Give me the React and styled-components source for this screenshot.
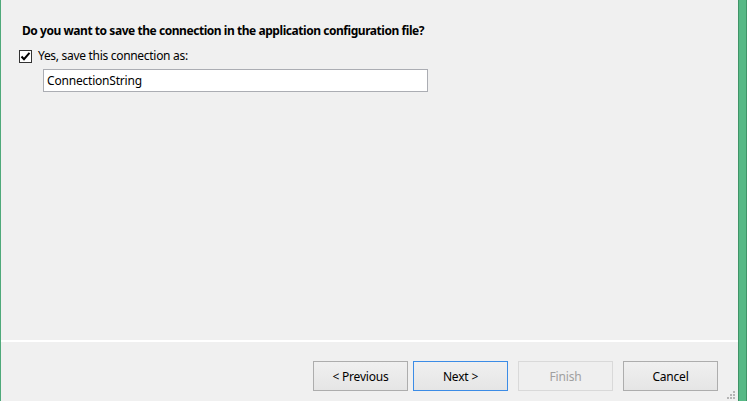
import React from "react";
import styled, { createGlobalStyle } from "styled-components";

const Global = createGlobalStyle`
  html, body { margin: 0; padding: 0; background: #f0f0f0; }
  body { font-family: "Noto Sans", "Open Sans", sans-serif; font-size: 12px; color: #000; }
`;

const Window = styled.div`
  width: 747px;
  height: 401px;
  display: flex;
  background: #f0f0f0;
  overflow: hidden;
`;

const LeftEdge = styled.div`
  width: 1px;
  background: #4fa97a;
  flex: none;
`;

const RightEdge = styled.div`
  width: 7px;
  flex: none;
  background: #57b986;
  border-left: 1px solid #3f9467;
  border-right: 1px solid #3f9467;
`;

const Main = styled.div`
  flex: 1;
  display: flex;
  flex-direction: column;
  position: relative;
`;

const Content = styled.div`
  flex: 1;
  padding: 23px 0 0 21px;
  display: flex;
  flex-direction: column;
`;

const Title = styled.div`
  font-weight: 700;
  font-size: 12px;
  line-height: 16px;
  letter-spacing: -0.45px;
`;

const CheckRow = styled.label`
  display: flex;
  align-items: center;
  gap: 6px;
  margin-top: 9px;
  margin-left: -3px;
  line-height: 16px;
  letter-spacing: -0.3px;
`;

const Box = styled.span`
  width: 11px;
  height: 11px;
  border: 1px solid #333;
  background: #fff;
  display: flex;
  align-items: center;
  justify-content: center;
`;

const Input = styled.div`
  margin-top: 5px;
  margin-left: 21px;
  width: 380px;
  height: 21px;
  border: 1px solid #abadb3;
  background: #fff;
  display: flex;
  align-items: center;
  padding-left: 3px;
  box-sizing: content-box;
  letter-spacing: -0.2px;
`;

const Separator = styled.div`
  height: 2px;
  background: #ffffff;
`;

const Footer = styled.div`
  height: 59px;
  display: flex;
  justify-content: flex-end;
  align-items: flex-start;
  padding: 19px 20px 0 0;
  box-sizing: border-box;
`;

const Button = styled.button`
  width: 95px;
  height: 30px;
  margin-left: ${(p) => p.$gap}px;
  border: 1px solid ${(p) => (p.$default ? "#3c8ce6" : p.disabled ? "#d9d9d9" : "#adadad")};
  background: ${(p) => (p.disabled ? "#efefef" : "linear-gradient(#f0f0f0, #e5e5e5)")};
  color: ${(p) => (p.disabled ? "#a0a0a0" : "#000")};
  font-family: "Noto Sans", "Open Sans", sans-serif;
  font-size: 12px;
  padding: 0;
  letter-spacing: -0.2px;
`;

const Grip = styled.svg`
  position: absolute;
  right: 2px;
  bottom: 1px;
`;

export default function App() {
  return (
    <Window>
      <Global />
      <LeftEdge />
      <Main>
        <Content>
          <Title>Do you want to save the connection in the application configuration file?</Title>
          <CheckRow>
            <Box>
              <svg width="11" height="11" viewBox="0 0 11 11">
                <path d="M1.5 5.5 L4 8.2 L9.5 1.8" fill="none" stroke="#000" strokeWidth="2" />
              </svg>
            </Box>
            Yes, save this connection as:
          </CheckRow>
          <Input>ConnectionString</Input>
        </Content>
        <Separator />
        <Footer>
          <Button $gap={0}>&lt; Previous</Button>
          <Button $gap={5} $default>Next &gt;</Button>
          <Button $gap={10} disabled>Finish</Button>
          <Button $gap={10}>Cancel</Button>
        </Footer>
        <Grip width="9" height="9" viewBox="0 0 9 9">
          <g fill="#b5b5b5">
            <rect x="6" y="0" width="2" height="2" />
            <rect x="3" y="3" width="2" height="2" />
            <rect x="6" y="3" width="2" height="2" />
            <rect x="0" y="6" width="2" height="2" />
            <rect x="3" y="6" width="2" height="2" />
            <rect x="6" y="6" width="2" height="2" />
          </g>
        </Grip>
      </Main>
      <RightEdge />
    </Window>
  );
}
